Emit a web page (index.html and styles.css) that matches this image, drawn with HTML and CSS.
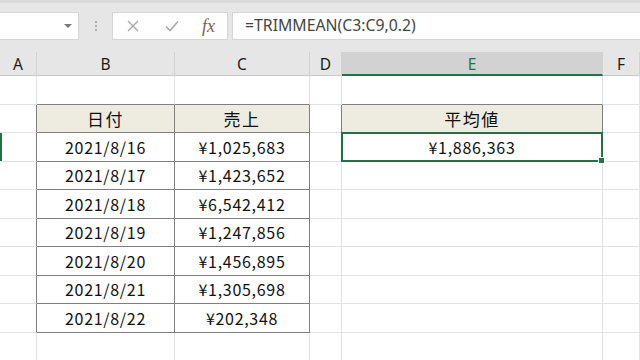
FILE: index.html
```html
<!DOCTYPE html>
<html lang="ja">
<head>
    <meta charset="UTF-8">
    <title>TRIMMEAN</title>
    <link rel="stylesheet" href="styles.css">
</head>
<body>
    <div class="toolbar">
        <div class="name-box">
            <span class="caret"></span>
        </div>
        <div class="grip"><span></span><span></span><span></span></div>
        <div class="buttons">
            <svg class="btn" width="14" height="14" viewBox="0 0 14 14">
                <path d="M2 2L12 12M12 2L2 12" stroke="#a8a8a8" stroke-width="1.4" fill="none"/>
            </svg>
            <svg class="btn" width="16" height="14" viewBox="0 0 16 14">
                <path d="M2 7.5L6 11.5L14 2.5" stroke="#a8a8a8" stroke-width="1.6" fill="none"/>
            </svg>
            <span class="fx">fx</span>
        </div>
        <div class="formula">=TRIMMEAN(C3:C9,0.2)</div>
    </div>

    <div class="sheet">
        <!-- column headers -->
        <div class="ch">A</div>
        <div class="ch">B</div>
        <div class="ch">C</div>
        <div class="ch">D</div>
        <div class="ch sel">E</div>
        <div class="ch">F</div>

        <!-- row 1 -->
        <div class="c"></div>
        <div class="c top"></div>
        <div class="c top"></div>
        <div class="c"></div>
        <div class="c top"></div>
        <div class="c"></div>

        <!-- row 2 -->
        <div class="c left"></div>
        <div class="c t head">日付</div>
        <div class="c t head">売上</div>
        <div class="c left"></div>
        <div class="c t head">平均値</div>
        <div class="c"></div>

        <!-- row 3 -->
        <div class="c left active-row"></div>
        <div class="c t">2021/8/16</div>
        <div class="c t">¥1,025,683</div>
        <div class="c"></div>
        <div class="c active">¥1,886,363</div>
        <div class="c"></div>

        <div class="c left"></div>
        <div class="c t">2021/8/17</div>
        <div class="c t">¥1,423,652</div>
        <div class="c"></div>
        <div class="c"></div>
        <div class="c"></div>

        <div class="c left"></div>
        <div class="c t">2021/8/18</div>
        <div class="c t">¥6,542,412</div>
        <div class="c"></div>
        <div class="c"></div>
        <div class="c"></div>

        <div class="c left"></div>
        <div class="c t">2021/8/19</div>
        <div class="c t">¥1,247,856</div>
        <div class="c"></div>
        <div class="c"></div>
        <div class="c"></div>

        <div class="c left"></div>
        <div class="c t">2021/8/20</div>
        <div class="c t">¥1,456,895</div>
        <div class="c"></div>
        <div class="c"></div>
        <div class="c"></div>

        <div class="c left"></div>
        <div class="c t">2021/8/21</div>
        <div class="c t">¥1,305,698</div>
        <div class="c"></div>
        <div class="c"></div>
        <div class="c"></div>

        <div class="c left"></div>
        <div class="c t">2021/8/22</div>
        <div class="c t">¥202,348</div>
        <div class="c"></div>
        <div class="c"></div>
        <div class="c"></div>

        <!-- row 10, 11 -->
        <div class="c"></div>
        <div class="c"></div>
        <div class="c"></div>
        <div class="c"></div>
        <div class="c"></div>
        <div class="c"></div>

        <div class="c"></div>
        <div class="c"></div>
        <div class="c"></div>
        <div class="c"></div>
        <div class="c"></div>
        <div class="c"></div>
    </div>
</body>
</html>
```

FILE: styles.css
```css
body {
    margin: 0;
    width: 640px;
    height: 360px;
    overflow: hidden;
    background-color: #fff;
    font-family: "Noto Sans", "Open Sans", sans-serif;
}
.toolbar {
    height: 52px;
    box-sizing: border-box;
    background-color: #e6e6e6;
    border-top: 3px solid #dadada;
    padding-top: 9px;
    display: flex;
    align-items: flex-start;
}
.name-box {
    width: 79px;
    height: 28px;
    box-sizing: border-box;
    background-color: #fff;
    border: 1px solid #d6d6d6;
    border-left: none;
    position: relative;
}
.caret {
    position: absolute;
    right: 6px;
    top: 11px;
    border-left: 4px solid transparent;
    border-right: 4px solid transparent;
    border-top: 4px solid #7a7a7a;
}
.grip {
    width: 33px;
    height: 28px;
    display: flex;
    flex-direction: column;
    align-items: center;
    justify-content: center;
    gap: 2px;
}
.grip span {
    width: 2px;
    height: 2px;
    background-color: #b0b0b0;
}
.buttons {
    width: 116px;
    height: 28px;
    box-sizing: border-box;
    background-color: #fff;
    border: 1px solid #d6d6d6;
    display: flex;
    align-items: center;
    padding-left: 13px;
    gap: 24px;
}
.fx {
    font-family: "Liberation Serif", serif;
    font-style: italic;
    font-size: 18px;
    color: #7b6048;
    margin-left: -2px;
    line-height: 1;
}
.formula {
    flex: 1;
    margin-left: 4px;
    height: 28px;
    box-sizing: border-box;
    background-color: #fff;
    border: 1px solid #d6d6d6;
    border-right: none;
    padding-left: 12px;
    font-size: 15.8px;
    line-height: 25px;
    color: #444;
}
.sheet {
    height: 308px;
    overflow: hidden;
    display: grid;
    grid-template-columns: 37px 138px 135px 32px 261px 37px;
    grid-template-rows: 24px repeat(11, 28.5px);
}
.ch {
    background-color: #e6e6e6;
    border-right: 1px solid #d2d2d2;
    border-bottom: 1px solid #c8c8c8;
    box-sizing: border-box;
    text-align: center;
    font-size: 15.5px;
    line-height: 24px;
    color: #1a1a1a;
}
.ch.sel {
    background-color: #d2d2d2;
    color: #217346;
    border-bottom: 2px solid #217346;
}
.c {
    box-sizing: border-box;
    border-right: 1px solid #e2e2e2;
    border-bottom: 1px solid #e2e2e2;
    display: flex;
    align-items: center;
    justify-content: center;
    font-family: "Noto Sans CJK JP", sans-serif;
    font-size: 16px;
    letter-spacing: 0.7px;
    color: #111;
}
.c.top {
    border-bottom-color: #7f7f7f;
}
.c.left {
    border-right-color: #7f7f7f;
}
.c.t {
    border-right-color: #7f7f7f;
    border-bottom-color: #7f7f7f;
}
.c.head {
    background-color: #eeece1;
    font-size: 17px;
    letter-spacing: 1.5px;
}
.c.active-row {
    box-shadow: inset 2px 0 0 #217346;
}
.c.active {
    position: relative;
    border: 2px solid #217346;
    margin: -1px 0 0 -1px;
}
.c.active::after {
    content: "";
    position: absolute;
    right: -4px;
    bottom: -4px;
    width: 5px;
    height: 5px;
    background-color: #217346;
    border: 1px solid #fff;
}
```
